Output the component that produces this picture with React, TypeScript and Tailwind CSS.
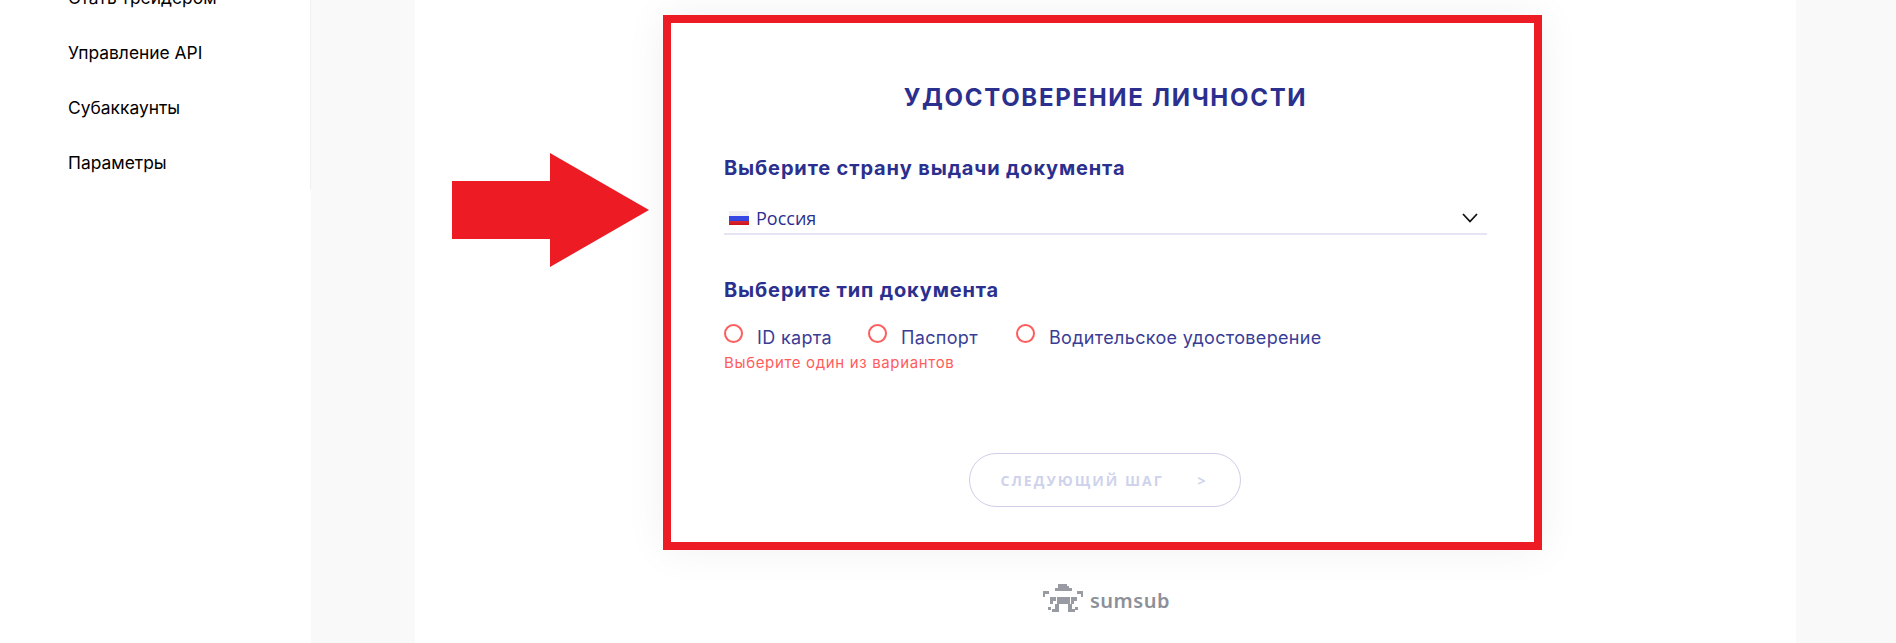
const navy = 'text-[#2b2f8e]'

function Flag() {
  return (
    <svg width="20" height="14" viewBox="0 0 20 14" className="shrink-0">
      <defs>
        <linearGradient id="shine" x1="0" y1="0" x2="0" y2="1">
          <stop offset="0" stopColor="#fff" stopOpacity="0.1" />
          <stop offset="0.6" stopColor="#fff" stopOpacity="0.12" />
          <stop offset="1" stopColor="#000" stopOpacity="0.1" />
        </linearGradient>
      </defs>
      <rect width="20" height="5" fill="#eeeef2" />
      <rect y="5" width="20" height="5" fill="#1c30e0" />
      <rect y="10" width="20" height="4" fill="#e0161f" />
      <rect width="20" height="14" fill="url(#shine)" />
    </svg>
  )
}

function SumsubMark() {
  // pixel robot mark
  return (
    <svg width="40" height="30" viewBox="0 0 40 30" fill="#8e9099" fillOpacity="0.9">
      <path d="M15 1h9v2h2v2h3v3H12V5h3z" />
      <path d="M0 8h6v3H2v3H0z" />
      <path d="M34 8h6v6h-2v-3h-4z" />
      <path d="M7 14h6v4h-3v3H7z" />
      <path d="M28 14h6v4h-3v3h-3z" />
      <path d="M14 14h13v7h2v5h-4v-5h-9v5h-4v-5h2z" />
      <rect x="5" y="24" width="3" height="3" />
      <rect x="32" y="24" width="3" height="3" />
      <rect x="9" y="26" width="7" height="3" />
      <rect x="25" y="26" width="7" height="3" />
    </svg>
  )
}

function Radio({ label, className }: { label: string; className: string }) {
  return (
    <div className={`flex ${className}`}>
      <span className="mt-[-4px] h-[19px] w-[19px] shrink-0 rounded-full border-2 border-[#ff5c5c]" />
      <span className="ml-[14px] text-[18px] leading-[20px] tracking-[0.33px] text-[#3a3d96]">{label}</span>
    </div>
  )
}

export default function App() {
  return (
    <div className="relative flex h-[643px] w-[1896px] overflow-hidden bg-[#f9f9f9] font-['Inter',sans-serif]">
      <aside className="h-full w-[311px] shrink-0 bg-white">
        <nav className="mt-[-12px] flex h-[202px] flex-col gap-[35px] border-r border-[#f0f0f0] pl-[68px] text-[17.4px] leading-[20px] text-black">
          <a>Стать трейдером</a>
          <a>Управление API</a>
          <a>Субаккаунты</a>
          <a>Параметры</a>
        </nav>
      </aside>

      <main className="ml-[104px] flex h-full w-[1381px] flex-col items-start bg-white pl-[248px] pt-[15px]">
        <section className="h-[535px] w-[879px] border-8 border-[#ed1c24] bg-white pl-[53px] pr-[47px] pt-[62px] shadow-[0_0_40px_rgba(0,0,0,0.06)]">
          <h1 className={`text-center text-[24px] font-bold uppercase leading-[26px] tracking-[1.7px] ${navy}`}>
            Удостоверение личности
          </h1>

          <h2 className={`mt-[45px] text-[20px] font-bold leading-[24px] tracking-[0.85px] ${navy}`}>Выберите страну выдачи документа</h2>

          <div className="mt-[23px] flex h-[32px] items-center border-b-2 border-[#e5e4f2] pl-[5px] pr-[8px]">
            <Flag />
            <span className={`ml-[7px] flex-1 text-[18px] font-['Open_Sans',sans-serif] ${navy}`}>Россия</span>
            <svg width="16" height="10" viewBox="0 0 16 10" fill="none" stroke="#111" strokeWidth="1.8" className="mr-[1px]">
              <path d="M1 1l7 7.5L15 1" />
            </svg>
          </div>

          <h2 className={`mt-[43px] text-[20px] font-bold leading-[24px] tracking-[0.85px] ${navy}`}>Выберите тип документа</h2>

          <div className="mt-[26px] flex">
            <Radio label="ID карта" className="w-[144px]" />
            <Radio label="Паспорт" className="w-[148px]" />
            <Radio label="Водительское удостоверение" className="flex-1" />
          </div>
          <p className="mt-[5px] text-[15px] leading-[20px] tracking-[0.65px] text-[#ff5c5c]">Выберите один из вариантов</p>

          <div className="mt-[80px] flex justify-center pr-[2px]">
            <button className="flex h-[54px] w-[272px] items-center rounded-full border border-[#cfcde8] pl-[31px] text-[14px] font-bold tracking-[2px] text-[#cfd2ec] font-['Open_Sans',sans-serif]">
              <span>СЛЕДУЮЩИЙ ШАГ</span>
              <span className="ml-[34px]">&gt;</span>
            </button>
          </div>
        </section>

        <div className="mt-[33px] ml-[380px] flex items-center gap-[7px]">
          <SumsubMark />
          <span className="mt-[6px] text-[20px] font-semibold leading-[24px] tracking-[0.5px] text-[#8e9099] font-['Noto_Sans',sans-serif]">
            sumsub
          </span>
        </div>
      </main>

      {/* red annotation arrow over the page */}
      <svg width="197" height="114" viewBox="0 0 197 114" className="absolute left-[452px] top-[153px]">
        <path d="M0 28h98V0l99 57-99 57V86H0z" fill="#ed1c24" />
      </svg>
    </div>
  )
}
